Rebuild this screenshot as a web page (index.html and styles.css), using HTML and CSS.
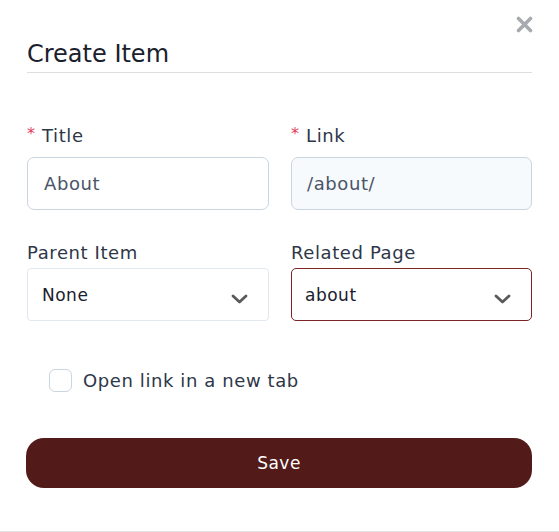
FILE: index.html
```html
<!DOCTYPE html>
<html>
<head>
<meta charset="utf-8">
<link rel="stylesheet" href="styles.css">
</head>
<body>
<div class="modal">
  <button class="close" aria-label="Close">
    <svg width="17" height="17" viewBox="0 0 17 17"><path d="M2.5 2.5 L14.5 14.5 M14.5 2.5 L2.5 14.5" stroke="#a7aaae" stroke-width="3.6" stroke-linecap="round"/></svg>
  </button>
  <h2 class="title">Create Item</h2>
  <form class="form">
    <div class="grid">
      <div class="field">
        <label class="label req"><span class="star">*</span>Title</label>
        <div class="input">About</div>
      </div>
      <div class="field">
        <label class="label req"><span class="star">*</span>Link</label>
        <div class="input disabled">/about/</div>
      </div>
      <div class="field">
        <label class="label">Parent Item</label>
        <div class="select">
          <span>None</span>
          <svg class="chev" width="17" height="10" viewBox="0 0 17 10"><path d="M2 2 L8.5 8 L15 2" fill="none" stroke="#5a5a5a" stroke-width="2.8" stroke-linecap="round" stroke-linejoin="round"/></svg>
        </div>
      </div>
      <div class="field">
        <label class="label">Related Page</label>
        <div class="select focus">
          <span>about</span>
          <svg class="chev" width="17" height="10" viewBox="0 0 17 10"><path d="M2 2 L8.5 8 L15 2" fill="none" stroke="#5a5a5a" stroke-width="2.8" stroke-linecap="round" stroke-linejoin="round"/></svg>
        </div>
      </div>
    </div>
    <label class="check">
      <span class="box"></span>
      <span>Open link in a new tab</span>
    </label>
    <button type="button" class="save">Save</button>
  </form>
</div>
</body>
</html>
```
FILE: styles.css
```css
* { box-sizing: border-box; }
html, body { margin: 0; padding: 0; background: #fff; }
body { font-family: "DejaVu Sans", "Open Sans", sans-serif; color: #2d3748; }
.modal {
  position: relative;
  width: 559px;
  height: 532px;
  padding: 0 27px;
  border-bottom: 1px solid #e3e3e3;
}
.close {
  position: absolute;
  top: 16px;
  right: 26px;
  border: 0;
  background: none;
  padding: 0;
  width: 17px;
  height: 17px;
  display: block;
}
.title {
  margin: 0;
  padding-top: 40px;
  padding-bottom: 4px;
  font-size: 24px;
  line-height: 28px;
  font-weight: normal;
  color: #1a202c;
  border-bottom: 1px solid #dedede;
}
.form { padding-top: 50px; }
.grid {
  display: grid;
  grid-template-columns: 242px 241px;
  column-gap: 22px;
  row-gap: 32px;
}
.field { display: flex; flex-direction: column; }
.label {
  font-size: 18px;
  line-height: 22px;
  color: #2d3748;
  letter-spacing: 0.6px;
  margin-bottom: 10px;
}
.label:not(.req) { margin-bottom: 4px; }
.star { color: #e53e5e; margin-right: 7px; font-size: 16px; vertical-align: 3px; letter-spacing: 0; }
.input {
  height: 53px;
  border: 1px solid #cbd5e0;
  border-radius: 7px;
  padding: 0 16px;
  display: flex;
  align-items: center;
  font-size: 18px;
  letter-spacing: 0.6px;
  color: #4a5568;
}
.input.disabled { background: #f7fafc; padding-left: 15px; }
.select {
  height: 53px;
  border: 1px solid #e2e8f0;
  border-radius: 4px;
  padding: 0 20px 0 14px;
  display: flex;
  align-items: center;
  justify-content: space-between;
  font-size: 17px;
  letter-spacing: 0.5px;
  color: #1a202c;
}
.select.focus { border-color: #7a2424; border-radius: 5px; padding-left: 13px; }
.chev { margin-top: 8px; }
.check {
  display: flex;
  align-items: center;
  gap: 11px;
  margin: 48px 0 0 22px;
  font-size: 18px;
  line-height: 22px;
  letter-spacing: 0.6px;
  color: #2d3748;
}
.box {
  width: 23px;
  height: 23px;
  border: 1px solid #cbd5e0;
  border-radius: 6px;
  background: #fff;
}
.save {
  display: block;
  width: 506px;
  margin: 46px 0 0 -1px;
  height: 50px;
  border: 0;
  border-radius: 18px;
  background: #521a18;
  color: #fff;
  font-family: inherit;
  font-size: 17px;
  letter-spacing: 0.5px;
}
```
